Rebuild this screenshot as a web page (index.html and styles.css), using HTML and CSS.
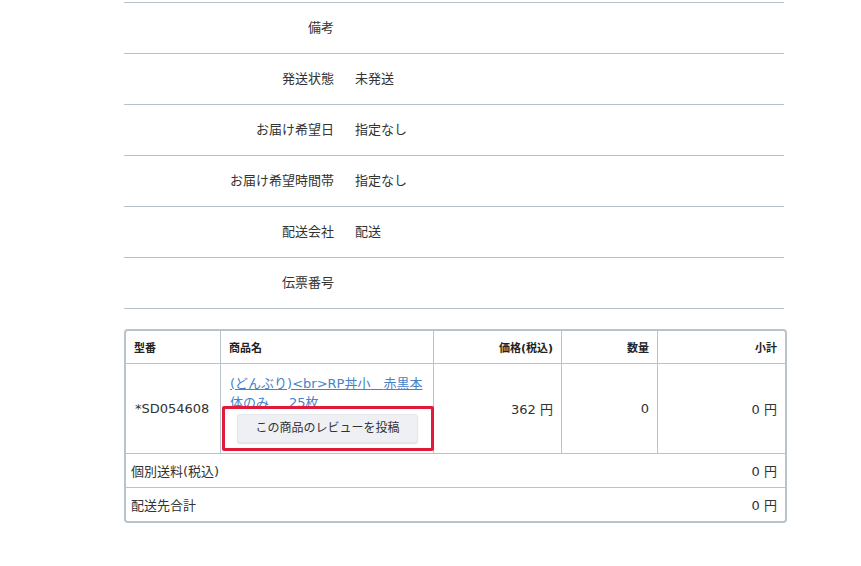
FILE: index.html
```html
<!DOCTYPE html>
<html lang="ja">
<head>
<meta charset="utf-8">
<title>注文詳細</title>
<link rel="stylesheet" href="styles.css">
</head>
<body>
<div class="page">
  <div class="info">
    <div class="info-row"><div class="info-label">備考</div><div class="info-value"></div></div>
    <div class="info-row"><div class="info-label">発送状態</div><div class="info-value">未発送</div></div>
    <div class="info-row"><div class="info-label">お届け希望日</div><div class="info-value">指定なし</div></div>
    <div class="info-row"><div class="info-label">お届け希望時間帯</div><div class="info-value">指定なし</div></div>
    <div class="info-row"><div class="info-label">配送会社</div><div class="info-value">配送</div></div>
    <div class="info-row"><div class="info-label">伝票番号</div><div class="info-value"></div></div>
  </div>

  <div class="items">
    <table class="items-table">
      <colgroup>
        <col class="c1"><col class="c2"><col class="c3"><col class="c4"><col class="c5">
      </colgroup>
      <thead>
        <tr>
          <th class="left">型番</th>
          <th class="left">商品名</th>
          <th class="right">価格(税込)</th>
          <th class="right">数量</th>
          <th class="right last">小計</th>
        </tr>
      </thead>
      <tbody>
        <tr class="item-row">
          <td class="code">*SD054608</td>
          <td class="name">
            <a class="item-link" href="#">(どんぶり)&lt;br&gt;RP丼小<span class="zw">　</span>赤黒本体のみ<span class="zw wide">　</span>25枚</a>
            <div class="review-wrap">
              <button class="review-btn" type="button">この商品のレビューを投稿</button>
              <div class="highlight"></div>
            </div>
          </td>
          <td class="right">362 円</td>
          <td class="right">0</td>
          <td class="right last">0 円</td>
        </tr>
        <tr class="sum-row">
          <td class="last" colspan="5">
            <div class="sum-line"><span>個別送料(税込)</span><span>0 円</span></div>
          </td>
        </tr>
        <tr class="sum-row final">
          <td class="last" colspan="5">
            <div class="sum-line"><span>配送先合計</span><span>0 円</span></div>
          </td>
        </tr>
      </tbody>
    </table>
  </div>
</div>
</body>
</html>
```

FILE: styles.css
```css
html, body {
  margin: 0;
  padding: 0;
  background: #ffffff;
}

body {
  font-family: "DejaVu Sans", "Noto Sans CJK JP", sans-serif;
  font-size: 13px;
  color: #333333;
}

.page {
  margin-left: 124px;
  padding-top: 2px;
}

.info {
  width: 660px;
  border-top: 1px solid #b6c1c9;
}

.info-row {
  display: grid;
  grid-template-columns: 220px 1fr;
  height: 50px;
  align-items: center;
  border-bottom: 1px solid #b6c1c9;
  line-height: 18px;
}

.info-label {
  text-align: right;
  padding-right: 10px;
}

.info-value {
  padding-left: 11px;
}

.items {
  margin-top: 20px;
  width: 659px;
  border: 2px solid #b9c3cb;
  border-radius: 4px;
  overflow: hidden;
}

.items-table {
  width: 100%;
  border-collapse: separate;
  border-spacing: 0;
  table-layout: fixed;
}

.c1 { width: 95px; }
.c2 { width: 213px; }
.c3 { width: 128px; }
.c4 { width: 96px; }
.c5 { width: auto; }

.items-table th,
.items-table td {
  border-right: 1px solid #b9c3cb;
  border-bottom: 1px solid #b9c3cb;
  padding: 0 8px;
}

.items-table th.last,
.items-table td.last {
  border-right: none;
}

.items-table th {
  height: 32px;
  font-size: 11px;
  font-weight: bold;
  color: #222222;
}

.left { text-align: left; }
.right { text-align: right; }

.item-row td {
  vertical-align: middle;
}

.items-table td.code {
  padding-left: 9px;
}

.items-table td.name {
  padding: 10px 8px 10px 9px;
  vertical-align: top;
  line-height: 18px;
}

.item-link {
  color: #4582c8;
  text-decoration: underline;
}

.zw {
  font-family: "Noto Sans CJK JP", sans-serif;
}

.zw.wide {
  margin-right: 7px;
}

.review-wrap {
  position: relative;
  display: flex;
  justify-content: center;
  margin-top: 2px;
  height: 29px;
}

.review-btn {
  font-family: inherit;
  font-size: 12px;
  color: #333333;
  background: #eef0f3;
  border: 1px solid #e3e6ea;
  border-radius: 3px;
  box-shadow: 0 1px 1px rgba(0, 0, 0, 0.12);
  height: 29px;
  padding: 0 17px;
  line-height: 27px;
}

.highlight {
  position: absolute;
  top: -8px;
  left: -8px;
  right: -9px;
  bottom: -8px;
  border: 3px solid #e21a3a;
  border-radius: 2px;
  pointer-events: none;
}

.sum-row td {
  height: 33px;
}

.items-table .sum-row td {
  padding: 0 8px 0 5px;
}

.sum-line {
  display: flex;
  justify-content: space-between;
  align-items: center;
}

.sum-row.final td {
  border-bottom: none;
}
```
